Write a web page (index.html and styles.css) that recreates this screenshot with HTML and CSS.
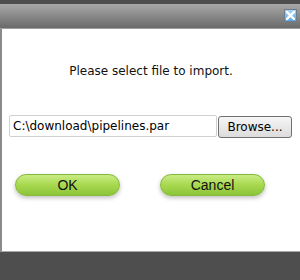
FILE: index.html
```html
<!DOCTYPE html>
<html lang="en">
<head>
    <meta charset="UTF-8">
    <title>Import</title>
    <link rel="stylesheet" href="styles.css">
</head>
<body>
    <div class="dialog">
        <div class="titlebar">
            <button class="close" title="Close">
                <svg width="9" height="9" viewBox="0 0 9 9">
                    <path d="M1 1 L8 8 M8 1 L1 8" stroke="#fff" stroke-width="2.4" stroke-linecap="square"/>
                </svg>
            </button>
        </div>
        <div class="content">
            <p class="message">Please select file to import.</p>
            <div class="file-row">
                <input type="text" class="file-input" value="C:\download\pipelines.par">
                <button class="browse">Browse...</button>
            </div>
            <div class="actions">
                <button class="pill">OK</button>
                <button class="pill">Cancel</button>
            </div>
        </div>
    </div>
</body>
</html>
```

FILE: styles.css
```css
body {
    margin: 0;
    background-color: #4e4e4e;
    font-family: "DejaVu Sans", Verdana, sans-serif;
}
.dialog {
    margin-top: 4px;
}
.titlebar {
    height: 25px;
    background: linear-gradient(#a8a8a8, #6a6a6a);
    border-bottom: 1px solid #a0a0a0;
    display: flex;
    justify-content: flex-end;
    align-items: flex-start;
    padding: 5px 3px 0 0;
    box-sizing: border-box;
}
.close {
    width: 13px;
    height: 13px;
    padding: 0;
    border: 1px solid #6e7c8c;
    background: linear-gradient(#a9d4f5, #5aa6e6);
    display: flex;
    align-items: center;
    justify-content: center;
}
.content {
    background-color: #fff;
    border-left: 2px solid #8a8a8a;
    border-bottom: 1px solid #a8a8a8;
    height: 223px;
    box-sizing: border-box;
    padding-top: 35px;
}
.message {
    margin: 0;
    text-align: center;
    font-size: 12px;
    color: #111;
}
.file-row {
    display: flex;
    margin: 37px 0 0 7px;
    gap: 1px;
}
.file-input {
    width: 208px;
    height: 22px;
    box-sizing: border-box;
    border: 1px solid #d0d0d0;
    border-radius: 2px;
    padding: 0 3px;
    font-family: "DejaVu Sans", Tahoma, sans-serif;
    font-size: 12px;
    color: #000;
}
.browse {
    width: 74px;
    height: 22px;
    margin-top: 1px;
    border: 1px solid #707070;
    border-radius: 3px;
    background: linear-gradient(#f6f6f6, #dcdcdc);
    font-family: "DejaVu Sans", Tahoma, sans-serif;
    font-size: 12px;
    color: #000;
    padding: 0;
}
.actions {
    display: flex;
    gap: 40px;
    margin: 36px 0 0 13px;
}
.pill {
    width: 105px;
    height: 22px;
    border: 1px solid #86b83a;
    border-radius: 11px;
    background: linear-gradient(#c8ec86, #a8d84e 50%, #8cc53a);
    box-shadow: 0 2px 4px rgba(0, 0, 0, 0.25);
    font-family: "Liberation Sans", Arial, sans-serif;
    font-size: 14px;
    color: #111;
    padding: 0;
}
```
